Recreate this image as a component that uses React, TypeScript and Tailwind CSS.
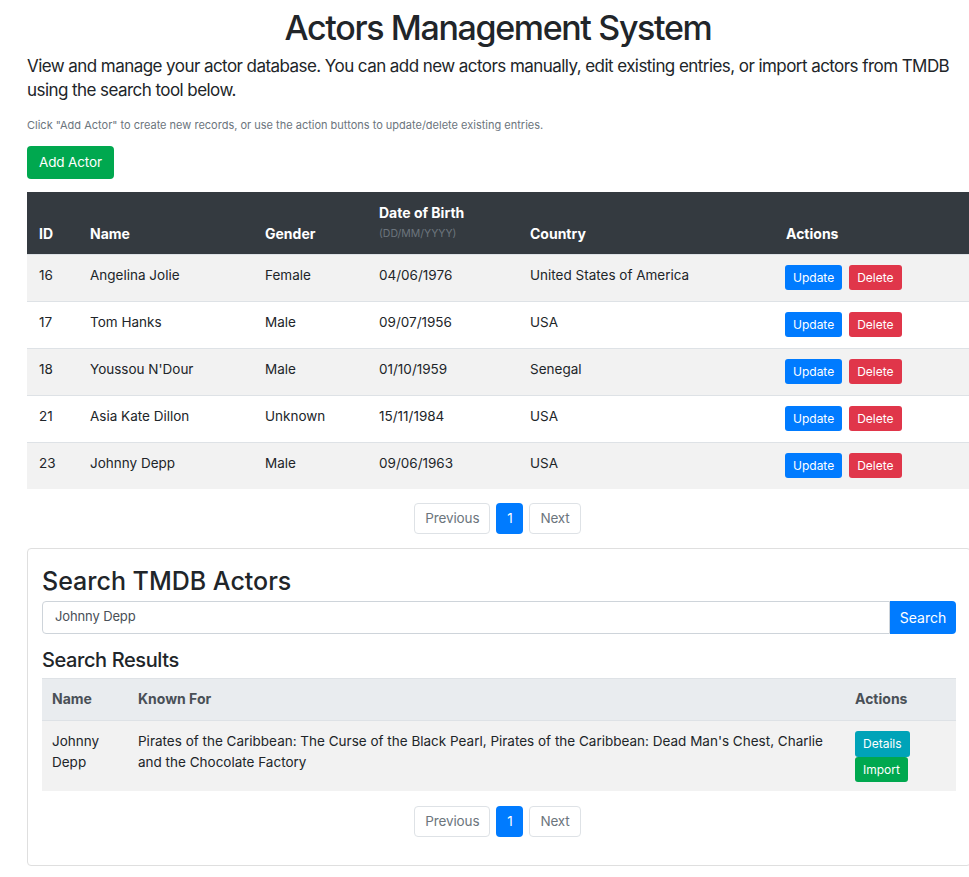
import React from 'react';

type Actor = {
  id: number;
  name: string;
  gender: string;
  dob: string;
  country: string;
};

const actors: Actor[] = [
  { id: 16, name: 'Angelina Jolie', gender: 'Female', dob: '04/06/1976', country: 'United States of America' },
  { id: 17, name: 'Tom Hanks', gender: 'Male', dob: '09/07/1956', country: 'USA' },
  { id: 18, name: "Youssou N'Dour", gender: 'Male', dob: '01/10/1959', country: 'Senegal' },
  { id: 21, name: 'Asia Kate Dillon', gender: 'Unknown', dob: '15/11/1984', country: 'USA' },
  { id: 23, name: 'Johnny Depp', gender: 'Male', dob: '09/06/1963', country: 'USA' },
];

function Pagination() {
  return (
    <div className="flex justify-center gap-[6px] pr-[3px]">
      <button className="h-[31px] px-[10px] rounded-[4px] border border-[#dee2e6] bg-white text-[13.5px] tracking-[-0.01em] text-[#6c757d]">
        Previous
      </button>
      <button className="h-[31px] w-[27px] rounded-[4px] bg-[#007bff] text-[13.5px] text-white">1</button>
      <button className="h-[31px] px-[10px] rounded-[4px] border border-[#dee2e6] bg-white text-[13.5px] tracking-[-0.01em] text-[#6c757d]">
        Next
      </button>
    </div>
  );
}

export default function App() {
  return (
    <div className="w-full overflow-hidden bg-white text-[#212529] font-['Inter','Liberation_Sans',sans-serif]">
      <div className="ml-[27px] w-[944px] pt-[6px] pb-[12px]">
        {/* HEADER */}
        <h1 className="text-center text-[34px] leading-[43px] font-medium tracking-[-0.04em] pr-[2px]">
          Actors Management System
        </h1>
        <p className="mt-[5px] text-[17px] leading-[24px] tracking-[-0.033em]">
          View and manage your actor database. You can add new actors manually, edit existing entries, or import actors
          from TMDB using the search tool below.
        </p>
        <p className="mt-[15px] text-[11px] leading-[16.5px] text-[#6c757d]">
          Click "Add Actor" to create new records, or use the action buttons to update/delete existing entries.
        </p>
        <button className="mt-[12px] h-[33px] px-[12px] rounded-[4px] bg-[#00a84f] text-white text-[13.5px] tracking-[-0.01em] leading-[21px]">
          Add Actor
        </button>

        {/* ACTORS TABLE */}
        <table className="mt-[13px] w-full table-fixed border-collapse text-[13.5px] leading-[21px]">
          <colgroup>
            <col className="w-[51px]" />
            <col className="w-[175px]" />
            <col className="w-[114px]" />
            <col className="w-[151px]" />
            <col className="w-[256px]" />
            <col />
          </colgroup>
          <thead>
            <tr>
              <th className="bg-[#343a40] text-white text-[14px] px-[12px] py-[10px] text-left align-bottom font-bold">ID</th>
              <th className="bg-[#343a40] text-white text-[14px] px-[12px] py-[10px] text-left align-bottom font-bold">Name</th>
              <th className="bg-[#343a40] text-white text-[14px] px-[12px] py-[10px] text-left align-bottom font-bold">Gender</th>
              <th className="bg-[#343a40] text-white text-[14px] px-[12px] py-[10px] text-left align-bottom font-bold">
                Date of Birth
                <div className="text-[10.5px] leading-[21px] font-normal text-[#6c757d]">(DD/MM/YYYY)</div>
              </th>
              <th className="bg-[#343a40] text-white text-[14px] px-[12px] py-[10px] text-left align-bottom font-bold">Country</th>
              <th className="bg-[#343a40] text-white text-[14px] px-[12px] py-[10px] text-left align-bottom font-bold">Actions</th>
            </tr>
          </thead>
          <tbody>
            {actors.map((a, i) => (
              <tr key={a.id} className={i % 2 === 0 ? 'bg-[#f2f2f2]' : 'bg-white'}>
                <td className="border-t border-[#dee2e6] px-[12px] pt-[10px] pb-[11px] align-top">{a.id}</td>
                <td className="border-t border-[#dee2e6] px-[12px] pt-[10px] pb-[11px] align-top">{a.name}</td>
                <td className="border-t border-[#dee2e6] px-[12px] pt-[10px] pb-[11px] align-top">{a.gender}</td>
                <td className="border-t border-[#dee2e6] px-[12px] pt-[10px] pb-[11px] align-top">{a.dob}</td>
                <td className="border-t border-[#dee2e6] px-[12px] pt-[10px] pb-[11px] align-top">{a.country}</td>
                <td className="border-t border-[#dee2e6] px-[11px] pt-[10px] pb-[11px] align-top">
                  <div className="flex gap-[7px]">
                    <button className="h-[25px] px-[8px] rounded-[3px] bg-[#007bff] text-white text-[12px]">Update</button>
                    <button className="h-[25px] px-[8px] rounded-[3px] bg-[#e0364a] text-white text-[12px]">Delete</button>
                  </div>
                </td>
              </tr>
            ))}
          </tbody>
        </table>

        <div className="mt-[14px]">
          <Pagination />
        </div>

        {/* TMDB SEARCH CARD */}
        <section className="mt-[14px] rounded-[4px] border border-[#dfdfdf] px-[14px] pt-[17px] pb-[15px]">
          <h2 className="text-[25px] leading-[30px] font-medium">Search TMDB Actors</h2>
          <div className="mt-[5px] flex h-[33px]">
            <div className="flex-1 flex items-center rounded-l-[4px] border border-[#ced4da] px-[12px] text-[13px] tracking-[-0.01em] text-[#495057]">
              Johnny Depp
            </div>
            <button className="w-[66px] rounded-r-[4px] bg-[#007bff] text-white text-[14px]">Search</button>
          </div>
          <h4 className="mt-[14px] text-[20px] leading-[25px] font-medium tracking-[-0.02em]">Search Results</h4>

          <table className="mt-[5px] w-full table-fixed border-collapse text-[13.5px] leading-[21px]">
            <colgroup>
              <col className="w-[84px]" />
              <col className="w-[717px]" />
              <col />
            </colgroup>
            <thead>
              <tr>
                <th className="bg-[#e9ecef] text-[#495057] text-[14px] border-t border-[#dee2e6] pl-[10px] pr-[12px] pt-[9px] pb-[11px] text-left align-bottom font-bold">
                  Name
                </th>
                <th className="bg-[#e9ecef] text-[#495057] text-[14px] border-t border-[#dee2e6] px-[12px] pt-[9px] pb-[11px] text-left align-bottom font-bold">
                  Known For
                </th>
                <th className="bg-[#e9ecef] text-[#495057] text-[14px] border-t border-[#dee2e6] px-[12px] pt-[9px] pb-[11px] text-left align-bottom font-bold">
                  Actions
                </th>
              </tr>
            </thead>
            <tbody>
              <tr className="bg-[#f2f2f2]">
                <td className="border-t border-[#dee2e6] pl-[10px] pr-[12px] pt-[10px] pb-[9px] align-top">Johnny Depp</td>
                <td className="border-t border-[#dee2e6] px-[12px] pt-[10px] pb-[9px] align-top">
                  Pirates of the Caribbean: The Curse of the Black Pearl, Pirates of the Caribbean: Dead Man's Chest,
                  Charlie and the Chocolate Factory
                </td>
                <td className="border-t border-[#dee2e6] px-[12px] pt-[10px] pb-[9px] align-top">
                  <div className="flex flex-col items-start">
                    <button className="h-[26px] px-[8px] rounded-[3px] bg-[#00a3b8] text-white text-[12px]">Details</button>
                    <button className="h-[25px] px-[8px] rounded-[3px] bg-[#00a84f] text-white text-[12px]">Import</button>
                  </div>
                </td>
              </tr>
            </tbody>
          </table>

          <div className="mt-[15px] mb-[13px]">
            <Pagination />
          </div>
        </section>
      </div>
    </div>
  );
}
